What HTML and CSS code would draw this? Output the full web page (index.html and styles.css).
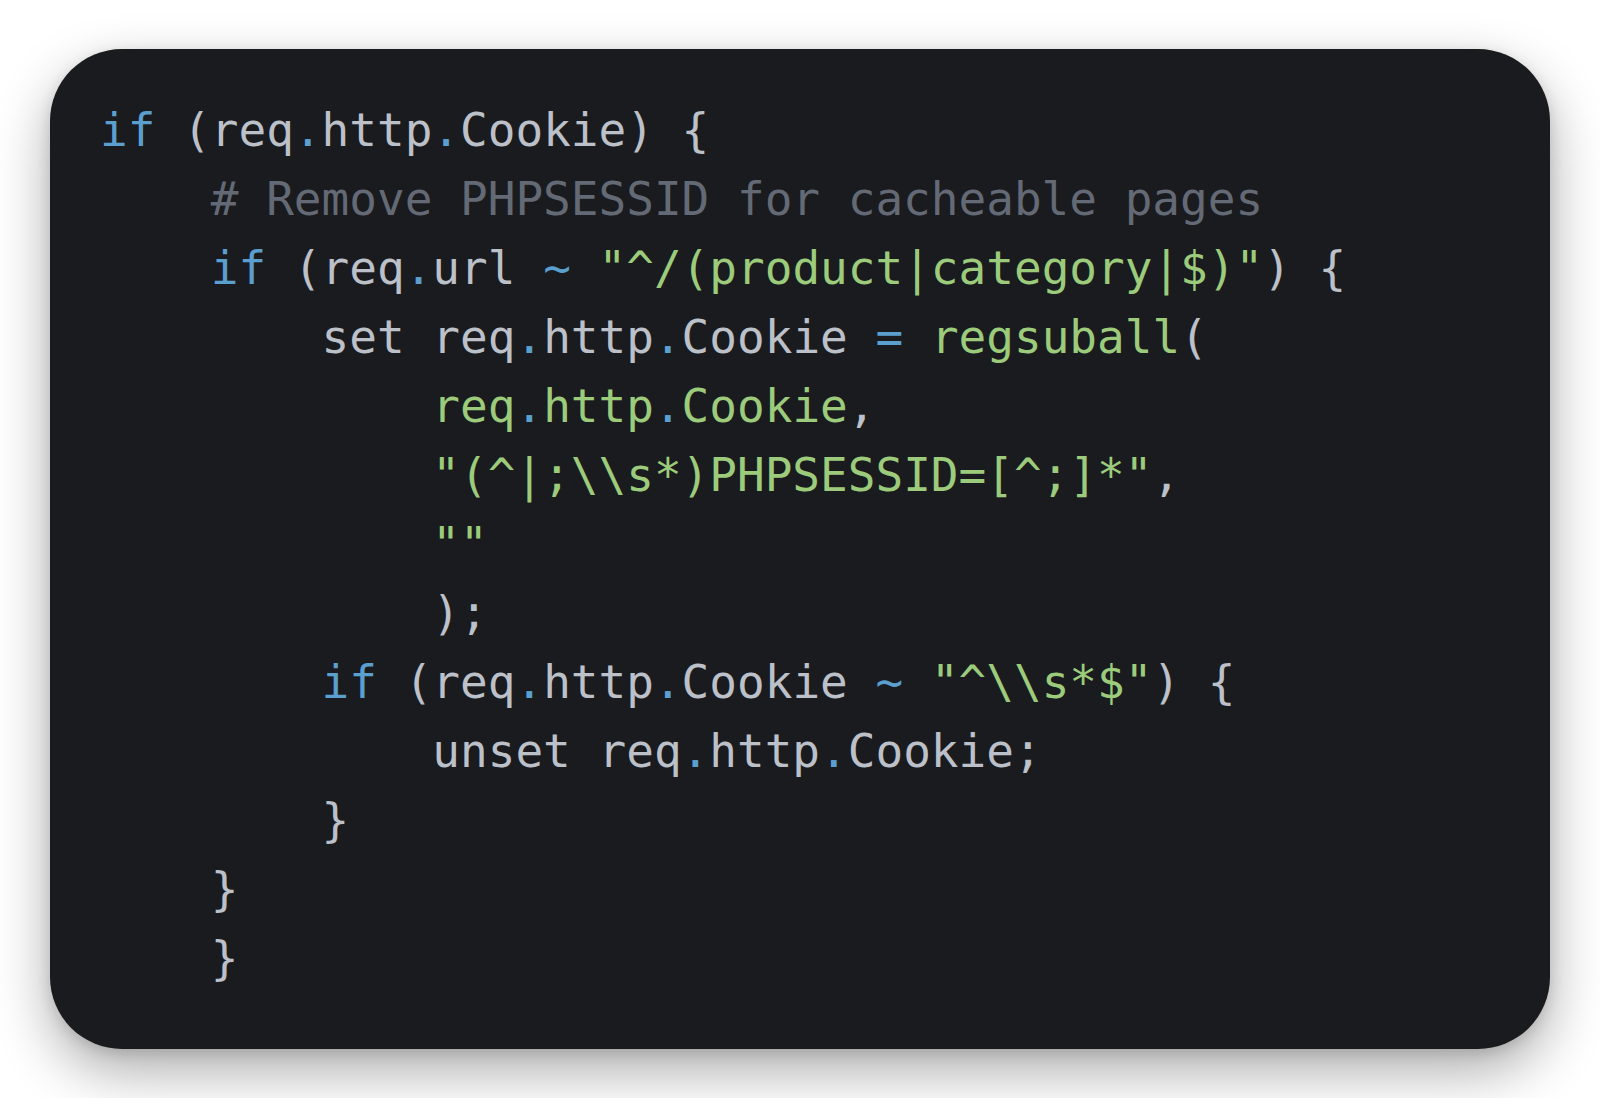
FILE: index.html
```html
<!DOCTYPE html>
<html lang="en">
<head>
<meta charset="utf-8">
<title>VCL snippet</title>
<link rel="stylesheet" href="styles.css">
</head>
<body>
<main class="stage">
<div class="code">
<div class="line"><span class="kw">if</span><span> (req</span><span class="op">.</span><span>http</span><span class="op">.</span><span>Cookie) {</span></div>
<div class="line i1"><span class="cm"># Remove PHPSESSID for cacheable pages</span></div>
<div class="line i1"><span class="kw">if</span><span> (req</span><span class="op">.</span><span>url </span><span class="op">~</span><span> </span><span class="str">"^/(product|category|$)"</span><span>) {</span></div>
<div class="line i2"><span>set req</span><span class="op">.</span><span>http</span><span class="op">.</span><span>Cookie </span><span class="op">=</span><span> </span><span class="str">regsuball</span><span>(</span></div>
<div class="line i3"><span class="str">req</span><span class="op">.</span><span class="str">http</span><span class="op">.</span><span class="str">Cookie</span><span>,</span></div>
<div class="line i3"><span class="str">"(^|;\\s*)PHPSESSID=[^;]*"</span><span>,</span></div>
<div class="line i3"><span class="str">""</span></div>
<div class="line i3"><span>);</span></div>
<div class="line i2"><span class="kw">if</span><span> (req</span><span class="op">.</span><span>http</span><span class="op">.</span><span>Cookie </span><span class="op">~</span><span> </span><span class="str">"^\\s*$"</span><span>) {</span></div>
<div class="line i3"><span>unset req</span><span class="op">.</span><span>http</span><span class="op">.</span><span>Cookie;</span></div>
<div class="line i2"><span>}</span></div>
<div class="line i1"><span>}</span></div>
<div class="line i1"><span>}</span></div>
</div>
</main>
</body>
</html>
```

FILE: styles.css
```css
html, body {
  margin: 0;
  padding: 0;
  background: #ffffff;
}

.stage {
  padding: 49px 50px;
  height: 1098px;
  box-sizing: border-box;
}

.code {
  height: 1000px;
  box-sizing: border-box;
  padding: 47px 50px 0 50px;
  background: #1a1b1f;
  border-radius: 72px;
  box-shadow: 0 22px 55px rgba(0, 0, 0, 0.33), 0 4px 14px rgba(0, 0, 0, 0.12);
  font-family: "DejaVu Sans Mono", "Liberation Mono", monospace;
  font-size: 46px;
  line-height: 69px;
  color: #bcc0c8;
}

.line {
  height: 69px;
  white-space: pre;
}

.i1 { padding-left: 4ch; }
.i2 { padding-left: 8ch; }
.i3 { padding-left: 12ch; }

.kw { color: #5b9fcf; }
.op { color: #5b9fcf; }
.str { color: #9ccb7b; }
.cm { color: #646a75; }
```
